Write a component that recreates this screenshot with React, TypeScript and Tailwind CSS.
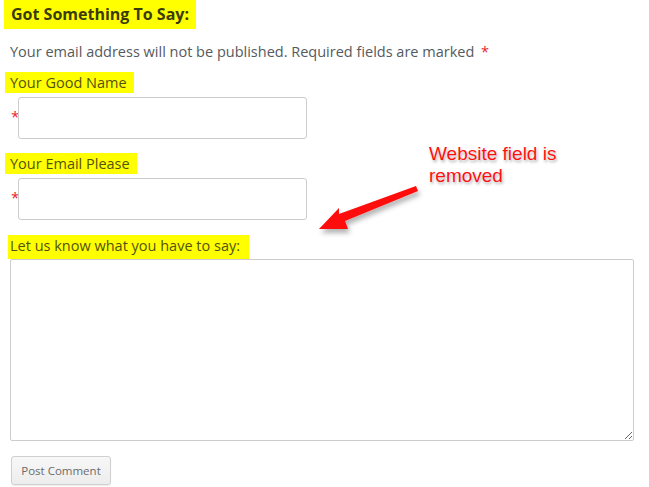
import type { JSX } from 'react';

const font = { fontFamily: '"Open Sans", "Noto Sans", sans-serif' };

function Field({ label }: { label: string }): JSX.Element {
  return (
    <div>
      <div className="ml-[-5px] h-[21px] w-fit bg-[#ffff00] pl-[5px] pr-[7px] text-[14.5px] leading-[21px] text-[#52520f]">
        {label}
      </div>
      <div className="mt-1 flex items-center">
        <span className="w-[8px] pl-[1px] pb-[4px] text-[15px] leading-none text-[#e8231f]">*</span>
        <input className="h-[42px] w-[289px] rounded-[3px] border border-[#cccccc] bg-white" />
      </div>
    </div>
  );
}

export default function App(): JSX.Element {
  return (
    <div className="relative h-[487px] w-[649px] overflow-hidden bg-white pl-[10px]" style={font}>
      {/* heading */}
      <div className="ml-[-6px] h-[29px] w-fit bg-[#ffff00] pl-[7px] pr-[7px] text-[16px] font-bold leading-[29px] text-[#3b3b08]">
        Got Something To Say:
      </div>

      <p className="mt-[13px] text-[14.5px] leading-[20px] text-[#555a60]">
        Your email address will not be published. Required fields are marked{' '}
        <span className="ml-[3px] text-[#e8231f]">*</span>
      </p>

      <div className="mt-[10px] flex flex-col gap-[14px]">
        <Field label="Your Good Name" />
        <Field label="Your Email Please" />
      </div>

      <div className="mt-[15px]">
        <div className="ml-[-2px] h-[24px] w-fit bg-[#ffff00] pl-[2px] pr-[9px] text-[14.5px] leading-[22px] text-[#52520f]">
          Let us know what you have to say:
        </div>
        <textarea className="block h-[182px] w-[624px] rounded-[2px] border border-[#cccccc] bg-white" />
      </div>

      <button className="mt-[15px] ml-[1px] h-[29px] w-[100px] rounded-[3px] border border-[#d0d0d0] bg-gradient-to-b from-[#f7f7f7] to-[#ededed] text-[11.5px] text-[#6b6b6b] shadow-[0_1px_1px_rgba(0,0,0,0.08)]">
        Post Comment
      </button>

      {/* annotation */}
      <div
        className="absolute left-[429px] top-[143px] text-[19px] leading-[22px] text-[#ff1010]"
        style={{
          fontFamily: '"Liberation Sans", Arial, sans-serif',
          textShadow: '0 0 2px #fff, 1px 2px 3px rgba(0,0,0,0.35)',
        }}
      >
        Website field is
        <br />
        removed
      </div>
      <svg className="absolute left-0 top-0" width="649" height="487" viewBox="0 0 649 487">
        <defs>
          <filter id="sh" x="-20%" y="-20%" width="140%" height="160%">
            <feDropShadow dx="2" dy="4" stdDeviation="2.5" floodColor="#000" floodOpacity="0.3" />
          </filter>
        </defs>
        <polygon
          points="416,186 418,191 345,221 348,229 319,229 339,208 339,214"
          fill="#ff0a0a"
          filter="url(#sh)"
        />
      </svg>
    </div>
  );
}
